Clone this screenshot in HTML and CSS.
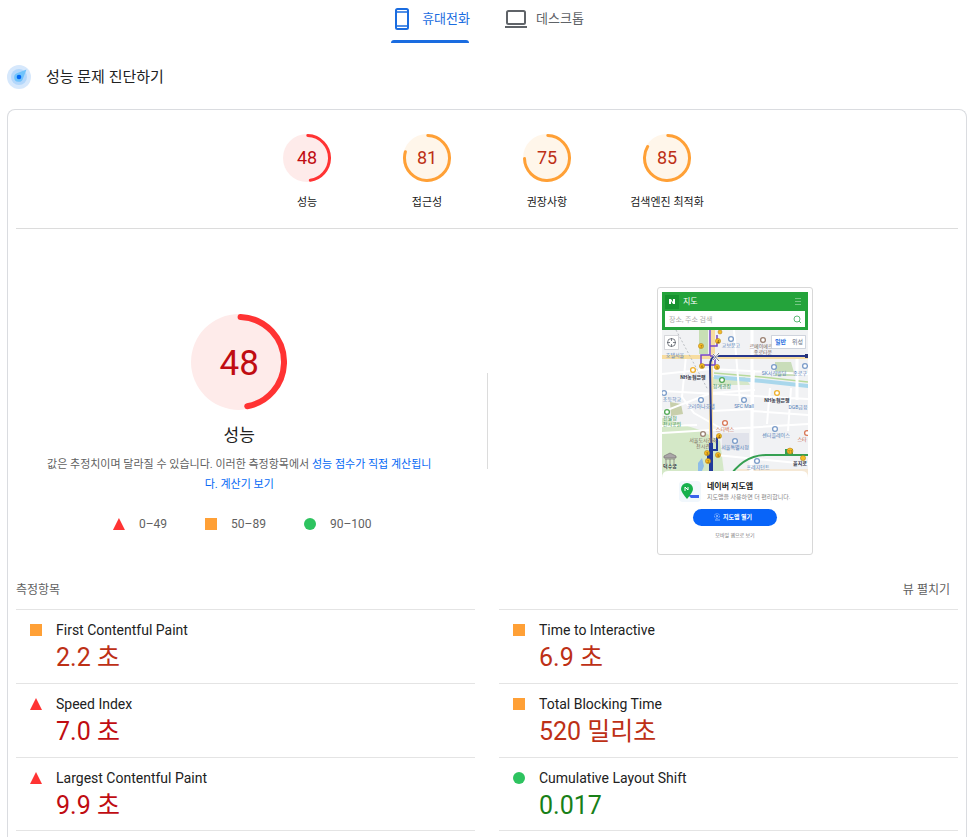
FILE: index.html
```html
<!DOCTYPE html>
<html lang="ko">
<head>
<meta charset="utf-8">
<meta name="viewport" content="width=device-width, initial-scale=1">
<title>성능 문제 진단하기</title>
<link rel="stylesheet" href="styles.css">
</head>
<body>
<div class="page">
  <div class="tabs" role="tablist">
    <button class="tab tab-active" type="button" role="tab" aria-selected="true">
      <svg class="tab-icon" viewBox="0 0 24 24" aria-hidden="true"><rect x="6" y="2" width="12" height="20" rx="1.5" fill="none" stroke="currentColor" stroke-width="2"/><path d="M6 5h12M6 19h12" stroke="currentColor" stroke-width="1.4"/></svg>
      휴대전화
    </button>
    <button class="tab" type="button" role="tab" aria-selected="false">
      <svg class="tab-icon" viewBox="0 0 24 24" aria-hidden="true"><rect x="3" y="4" width="18" height="13" rx="1.5" fill="none" stroke="currentColor" stroke-width="2"/><path d="M1 20h22" stroke="currentColor" stroke-width="2"/></svg>
      데스크톱
    </button>
  </div>

  <header class="heading">
    <svg class="heading-icon" viewBox="0 0 24 24" aria-hidden="true"><circle cx="12" cy="12" r="12" fill="#d6e8fc"/><circle cx="12" cy="12" r="8" fill="#b3d7fb"/><path d="M19.500 4.500 16 13.500A4.500 4.500 0 1 1 10.500 8Z" fill="#6fc3fb"/><circle cx="12" cy="12" r="2.300" fill="#0068f5"/></svg>
    <h1 class="heading-title">성능 문제 진단하기</h1>
  </header>

  <main class="card">
    <nav class="scores">
      <a class="score fail" href="#performance">
        <span class="gauge"><svg viewBox="0 0 48 48" aria-hidden="true"><circle class="gauge-base" cx="24" cy="24" r="24"/><circle class="gauge-arc" cx="24" cy="24" r="22.500" stroke-width="3" pathLength="100" stroke-dasharray="47 100" transform="rotate(-88 24 24)"/></svg><span class="gauge-value">48</span></span>
        <span>성능</span>
      </a>
      <a class="score average" href="#accessibility">
        <span class="gauge"><svg viewBox="0 0 48 48" aria-hidden="true"><circle class="gauge-base" cx="24" cy="24" r="24"/><circle class="gauge-arc" cx="24" cy="24" r="22.500" stroke-width="3" pathLength="100" stroke-dasharray="79 100" transform="rotate(-88 24 24)"/></svg><span class="gauge-value">81</span></span>
        <span>접근성</span>
      </a>
      <a class="score average" href="#best-practices">
        <span class="gauge"><svg viewBox="0 0 48 48" aria-hidden="true"><circle class="gauge-base" cx="24" cy="24" r="24"/><circle class="gauge-arc" cx="24" cy="24" r="22.500" stroke-width="3" pathLength="100" stroke-dasharray="74 100" transform="rotate(-88 24 24)"/></svg><span class="gauge-value">75</span></span>
        <span>권장사항</span>
      </a>
      <a class="score average" href="#seo">
        <span class="gauge"><svg viewBox="0 0 48 48" aria-hidden="true"><circle class="gauge-base" cx="24" cy="24" r="24"/><circle class="gauge-arc" cx="24" cy="24" r="22.500" stroke-width="3" pathLength="100" stroke-dasharray="83 100" transform="rotate(-88 24 24)"/></svg><span class="gauge-value">85</span></span>
        <span>검색엔진 최적화</span>
      </a>
    </nav>

    <section class="overview" id="performance">
      <div class="summary">
        <div class="gauge gauge-large fail"><svg viewBox="0 0 96 96" aria-hidden="true"><circle class="gauge-base" cx="48" cy="48" r="48"/><circle class="gauge-arc" cx="48" cy="48" r="45" stroke-width="6" pathLength="100" stroke-dasharray="46.500 100" transform="rotate(-88 48 48)"/></svg><span class="gauge-value">48</span></div>
        <h2 class="summary-title">성능</h2>
        <p class="summary-text">값은 추정치이며 달라질 수 있습니다. 이러한 측정항목에서 <a href="#scoring">성능 점수가 직접 계산됩니다.</a> <a href="#calculator">계산기 보기</a></p>
        <ul class="legend">
          <li><i class="mark mark-fail"></i>0–49</li>
          <li><i class="mark mark-average"></i>50–89</li>
          <li><i class="mark mark-pass"></i>90–100</li>
        </ul>
      </div>
      <div class="separator"></div>
      <div class="shot">
        <svg class="shot-image" viewBox="0 0 146 258" role="img" aria-label="네이버 지도">
          <rect width="146" height="258" fill="#fff"/>
          <rect y="38" width="146" height="150" fill="#f1f2f4"/>
          <path d="M0 126 38 138 58 149 63 188H0Z" fill="#d4e8c7"/>
          <path d="M37 38h9v24h-9z" fill="#c8dfb5"/>
          <path d="M113 70h16l4 14h-20z" fill="#c9ddba"/>
          <path d="M51 85h32l5 8H51z" fill="#d5e7c9"/>
          <path d="m8 110 11 2 2 10-12 2z" fill="#c8cfab"/>
          <path d="M60 141h27v17H60z" fill="#e1e3eb"/>
          <path d="M75 177h71v11H73z" fill="#f5e8d5"/>
          <path d="m52 83 48 4 46 5v4l-46-5-48-4z" fill="#a9d7ec"/>
          <path d="m52 81 48 4 46 5" fill="none" stroke="#b8da9c" stroke-width="1.500"/>
          <g fill="none" stroke="#fff" stroke-width="2">
            <path d="M0 82 48 77 146 82M0 99 146 107M0 120 49 101 93 98M0 141 146 132M24 64 20 105 32 121 60 137M72 38 78 110M92 78 88 188M108 96 105 132M129 96 126 139M90 119 146 123M54 163 146 172M49 119 90 117M0 134 35 133"/>
            <path d="M90 38v165M135 66v42" stroke-width="3"/>
          </g>
          <path d="M0 65h146" stroke="#f7dda0" stroke-width="4"/>
          <path d="M51 38v28M49 69v119" stroke="#f7dda0" stroke-width="4"/>
          <path d="m14 38 32 60" stroke="#a4a7ae" stroke-width=".7" stroke-dasharray="2 2"/>
          <path d="M48 38v25h-9v10h14v-9h-5M48 54h7V43" fill="none" stroke="#7546c7" stroke-width="1.500"/>
          <path d="M146 64H56q-8 0-8 10l2 114" fill="none" stroke="#27378c" stroke-width="2"/>
          <path d="M49 151v28M55 145v13h-6M46 160v9h5" fill="none" stroke="#213b9a" stroke-width="2"/>
          <path d="M49 151v28" stroke="#213b9a" stroke-width="4"/>
          <path d="M65 188q16-25 39-25h42" fill="none" stroke="#35a052" stroke-width="2"/>
          <path d="M123 157h8v6h-8z" fill="#35a052"/>
          <path d="M36 171l4-5 2 8-2 5h-4z" fill="#8dbce8"/>
          <path d="m51 68 6-7m-6 1 6 7" stroke="#fff" stroke-width="2"/><path d="m51 68 6-7m-6 1 6 7" stroke="#555a6c" stroke-width=".8"/>
          <path d="M143 62h4v4h-4z" fill="#283477"/>
          <g fill="#f5bb22" stroke="#ad7d18" stroke-width=".5"><circle cx="39" cy="54" r="2.600"/><circle cx="56" cy="49" r="2.600"/><circle cx="40" cy="74" r="2.600"/><circle cx="55" cy="75" r="2.600"/><circle cx="57" cy="144" r="2.600"/><circle cx="45" cy="161" r="2.600"/><circle cx="56" cy="163" r="2.600"/><circle cx="46" cy="169" r="2.600"/><circle cx="128" cy="159" r="3"/><circle cx="141" cy="166" r="2.600"/><circle cx="58" cy="40" r="2"/></g>
          <g class="map-digit"><text x="39" y="55.500">7</text><text x="56" y="50.500">4</text><text x="40" y="75.500">6</text><text x="55" y="76.500">5</text><text x="57" y="145.500">4</text><text x="45" y="162.500">3</text><text x="56" y="164.500">5</text><text x="46" y="170.500">2</text><text x="128" y="160.500">11</text></g>
          <g fill="#fff" stroke-width="1.300"><g stroke="#7b9cc9"><circle cx="69" cy="47" r="2.400"/><circle cx="112" cy="75" r="2.400"/><circle cx="143" cy="74" r="2.400"/><circle cx="39" cy="108" r="2.400"/><circle cx="82" cy="108" r="2.400"/><circle cx="113" cy="137" r="2.400"/><circle cx="73" cy="149" r="2.400"/><circle cx="95" cy="169" r="2.400"/><circle cx="2" cy="101" r="2.400"/></g><g stroke="#f0b02c"><circle cx="31" cy="78" r="2.400"/><circle cx="115" cy="101" r="2.400"/></g><g stroke="#52a955"><circle cx="60" cy="88" r="2.400"/><circle cx="5" cy="120" r="2.400"/></g><g stroke="#d87858"><circle cx="63" cy="131" r="2.400"/><circle cx="145" cy="141" r="2.400"/></g><g stroke="#9b8273"><circle cx="101" cy="48" r="2.400"/><circle cx="41" cy="142" r="2.400"/></g></g>
          <path d="m2 164 6-3 6 3v2H2zM3 167h10M4 167v5m4-5v5m4-5v5" stroke="#787476" stroke-width=".7" fill="#aaa6a7"/>
          <g class="map-label">
            <g class="blue"><text x="69" y="55">교보문고</text><text x="13" y="65">호텔서울</text><text x="112" y="83">SK서린빌딩</text><text x="138" y="83">종로구</text><text x="39" y="116">코리아나호텔</text><text x="82" y="116">SFC Mall</text><text x="114" y="145">센터플레이스</text><text x="73" y="157">서울특별시청</text><text x="96" y="177">프레지던트</text><text x="10" y="109">초등학교</text><text x="136" y="117">DGB금융</text></g>
            <g class="brown"><text x="99" y="56">르메이에르</text><text x="101" y="62">종로타운</text><text x="41" y="150">서울도시건축</text><text x="41" y="156">전시관</text></g>
            <g class="green"><text x="60" y="96">청계광장</text><text x="8" y="128">전달청</text><text x="10" y="134">전시공원</text></g>
            <g class="orange"><text x="63" y="139">스타벅스</text><text x="140" y="149">스타</text></g>
            <g class="dark"><text x="31" y="87">NH농협은행</text><text x="115" y="110">NH농협은행</text><text x="8" y="176">덕수궁</text><text x="138" y="173">을지로</text></g>
          </g>
          <path d="M0 0h146v38H0z" fill="#24a33b"/><path d="M3 3h14v14H3z" fill="#16922f"/><path d="M7 12V7h2l2 3V7h2v5h-2L9 9v3z" fill="#fff"/>
          <text class="app-title" x="21" y="12">지도</text>
          <path d="M133 6.500h6m-6 3h6m-6 3h6" stroke="#8bd198" stroke-width=".8"/>
          <path d="M3 19h140v16H3z" fill="#fff"/><text class="app-search" x="7" y="30">장소, 주소 검색</text>
          <circle cx="135" cy="27" r="3" fill="none" stroke="#61b979"/><path d="m137 29 2 2" stroke="#61b979"/>
          <path d="M2.500 43.500h14v14h-14z" fill="#fff" stroke="#c7c9cf" stroke-width=".7"/><circle cx="9.500" cy="50.500" r="4" fill="none" stroke="#5d626b" stroke-width=".8"/><path d="M9.500 46v3m0 3v3M5 50.500h3m3 0h3" stroke="#5d626b" stroke-width=".8"/>
          <path d="M109.500 43.500h34v13h-34z" fill="#fff" stroke="#bdc4d0" stroke-width=".7"/><text class="app-toggle app-on" x="113" y="52">일반</text><text class="app-toggle" x="130" y="52">위성</text>
          <path d="M0 258v-72q0-7 6-7h134q6 0 6 7v72z" fill="#fff"/>
          <rect x="17" y="189" width="22" height="21" rx="4" fill="#f1f7fc"/><path d="M26 203h11v3H29z" fill="#3962ec"/><path d="M25 207q-6-7-6-10a6 6 0 0 1 12 0q0 3-6 10" fill="#16b04c"/><path d="M23 199v-4l3 3v-3" fill="none" stroke="#fff"/>
          <text class="app-name" x="45" y="197">네이버 지도앱</text><text class="app-note" x="45" y="207">지도앱을 사용하면 더 편리합니다.</text>
          <rect x="31" y="217" width="84" height="17" rx="8.500" fill="#0864f9"/><circle cx="55" cy="224" r="2.500" fill="none" stroke="#a9cbff" stroke-width=".7" stroke-dasharray="2 1"/><path d="m54 223 2 1-2 1m-1 3h5" fill="none" stroke="#c4dbff" stroke-width=".7"/>
          <text class="app-button" x="61" y="227">지도앱 열기</text><text class="app-web" x="73" y="245">모바일 웹으로 보기</text>
        </svg>
      </div>
    </section>

    <section class="metrics">
      <div class="metrics-head"><h2>측정항목</h2><button type="button">뷰 펼치기</button></div>
      <div class="metrics-grid">
        <div class="metric average"><i class="mark mark-average"></i><h3>First Contentful Paint</h3><p>2.2 초</p></div>
        <div class="metric average"><i class="mark mark-average"></i><h3>Time to Interactive</h3><p>6.9 초</p></div>
        <div class="metric fail"><i class="mark mark-fail"></i><h3>Speed Index</h3><p>7.0 초</p></div>
        <div class="metric average"><i class="mark mark-average"></i><h3>Total Blocking Time</h3><p>520 밀리초</p></div>
        <div class="metric fail metric-last"><i class="mark mark-fail"></i><h3>Largest Contentful Paint</h3><p>9.9 초</p></div>
        <div class="metric pass metric-last"><i class="mark mark-pass"></i><h3>Cumulative Layout Shift</h3><p>0.017</p></div>
      </div>
    </section>
  </main>
</div>
</body>
</html>
```
FILE: styles.css
```css
* { box-sizing: border-box; }
body { margin: 0; background: #fff; color: #212121; font-family: Roboto, "Noto Sans CJK KR", sans-serif; font-size: 12px; line-height: 20px; }
h1, h2, h3, p, ul { margin: 0; padding: 0; font-weight: 400; }
button { margin: 0; padding: 0; border: 0; background: none; font: inherit; color: inherit; cursor: pointer; }
a { color: #0468f5; text-decoration: none; }
.page { display: flex; flex-direction: column; min-height: 100vh; padding: 0 2px 0 7px; }

.tabs { display: flex; justify-content: center; gap: 34px; height: 43px; }
.tab { position: relative; display: flex; align-items: center; gap: 8px; padding-bottom: 5px; color: #5f6368; font-size: 13px; }
.tab-icon { width: 24px; height: 24px; }
.tab-active { color: #1a6ce0; }
.tab-active::after { content: ""; position: absolute; left: 1px; right: 1px; bottom: 0; height: 3px; border-radius: 3px 3px 0 0; background: #1a6ce0; }

.heading { display: flex; align-items: center; gap: 15px; height: 66px; padding-top: 2px; }
.heading-icon { width: 24px; height: 24px; }
.heading-title { font-size: 15px; line-height: 24px; }

.card { flex: 1; padding: 24px 8px 0; border: 1px solid #dadce0; border-bottom: 0; border-radius: 8px 8px 0 0; }
.fail { --base: #feebea; --arc: #ff3333; --text: #c00c12; }
.average { --base: #fff6ea; --arc: #ffa036; --text: #bd3016; }
.pass { --text: #188018; }

.scores { display: flex; justify-content: center; padding-bottom: 15px; border-bottom: 1px solid #dcdcdc; }
.score { display: flex; flex-direction: column; align-items: center; gap: 11px; width: 120px; color: #212121; font-size: 11px; }
.gauge { position: relative; display: block; width: 48px; height: 48px; color: var(--text); font-size: 18px; }
.gauge svg { display: block; width: 100%; height: 100%; }
.gauge-base { fill: var(--base); }
.gauge-arc { fill: none; stroke: var(--arc); stroke-linecap: round; }
.gauge-value { position: absolute; inset: 0; display: flex; align-items: center; justify-content: center; }
.gauge-large { width: 96px; height: 96px; font-size: 35px; }
.gauge-large .gauge-value { padding-top: 4px; }

.overview { display: grid; grid-template-columns: 1fr 1px 1fr; column-gap: 24px; align-items: center; padding: 58px 0 25px; }
.separator { height: 96px; background: #dcdcdc; }
.summary { display: flex; flex-direction: column; align-items: center; padding: 6px 26px 0; text-align: center; }
.summary-title { margin: 13px 0 8px; font-size: 17px; line-height: 24px; }
.summary-text { color: #5f5f5f; font-size: 11px; }
.legend { display: flex; gap: 38px; margin-top: 19px; padding-left: 6px; color: #616161; list-style: none; }
.legend li { display: flex; align-items: center; gap: 14px; }
.mark { display: block; flex: none; width: 12px; height: 12px; }
.mark-fail { background: #ff3333; clip-path: polygon(50% 0, 100% 100%, 0 100%); }
.mark-average { background: #ffa036; }
.mark-pass { border-radius: 50%; background: #2dc35f; }

.shot { justify-self: center; padding: 4px; border: 1px solid #d8d8d8; border-radius: 3px; }
.shot-image { display: block; width: 146px; height: 258px; }
.map-digit { fill: #594010; font-size: 4px; text-anchor: middle; }
.map-label { font-size: 5px; text-anchor: middle; }
.blue { fill: #527eb8; }
.brown { fill: #756358; }
.green { fill: #3c9251; }
.orange { fill: #c5613f; }
.dark { fill: #34384a; font-weight: 700; }
.app-title { fill: #fff; font-size: 8px; }
.app-search { fill: #a9a9a9; font-size: 7px; }
.app-toggle { fill: #667185; font-size: 6px; }
.app-on { fill: #1b6ade; font-weight: 700; }
.app-name { fill: #222; font-size: 8px; font-weight: 700; }
.app-note { fill: #888; font-size: 6px; }
.app-button { fill: #fff; font-size: 6px; font-weight: 700; }
.app-web { fill: #777; font-size: 5px; text-anchor: middle; }

.metrics-head { display: flex; justify-content: space-between; padding: 0 8px 9px 0; color: #5f5f5f; }
.metrics-head h2 { font-size: 12px; line-height: 20px; }
.metrics-grid { display: grid; grid-template-columns: 1fr 1fr; column-gap: 24px; }
.metric { display: grid; grid-template-columns: 12px 1fr; column-gap: 14px; row-gap: 1px; align-items: center; padding: 10px 14px 8px; border-top: 1px solid #e4e4e4; }
.metric-last { padding-bottom: 7px; border-bottom: 1px solid #e4e4e4; }
.metric h3 { font-size: 14px; line-height: 20px; }
.metric p { grid-column: 2; color: var(--text); font-size: 25px; line-height: 34px; }
```
